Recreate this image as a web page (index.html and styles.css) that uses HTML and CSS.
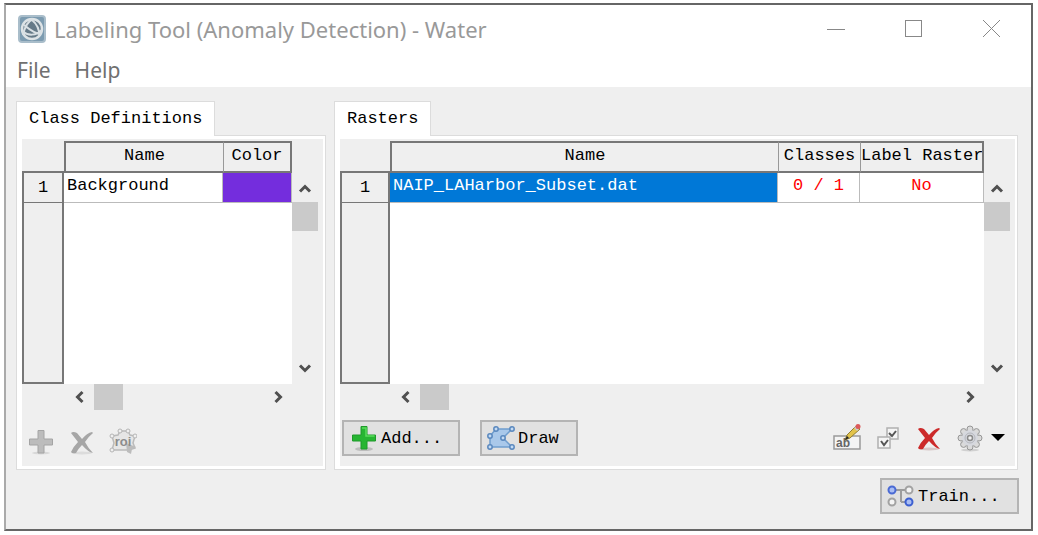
FILE: index.html
```html
<!DOCTYPE html>
<html lang="en">
<head>
    <meta charset="UTF-8">
    <meta name="viewport" content="width=device-width, initial-scale=1.0">
    <title>Labeling Tool (Anomaly Detection) - Water</title>
    <link rel="stylesheet" href="styles.css">
</head>
<body>
    <!-- shared scrollbar arrow -->
    <svg class="defs" width="0" height="0">
        <symbol id="chevron" viewBox="0 0 14 14">
            <path d="M2 9.500 L7 4.500 L12 9.500" fill="none" stroke="#505050" stroke-width="3"/>
        </symbol>
    </svg>

    <div class="window">
        <header class="title-bar">
            <svg class="app-icon" viewBox="0 0 28 28">
                <rect x="1" y="1" width="26" height="26" rx="3" fill="#7c9bb0" stroke="#a9bdca" stroke-width="2"/>
                <circle cx="14" cy="14" r="10" fill="#667a88" stroke="#dde3e6" stroke-width="2.500"/>
                <path d="M5 20 C7 11 10 6 15 4 M13 4 C19 9 22 14 21 21 M4 16 C10 21 18 21 24 15 M6 10 C12 15 18 19 23 19" fill="none" stroke="#d9e0e4" stroke-width="2"/>
            </svg>
            <h1>Labeling Tool (Anomaly Detection) - Water</h1>
            <div class="window-controls">
                <button type="button" aria-label="Minimize"><svg viewBox="0 0 20 20"><path d="M1 10.500 H19"/></svg></button>
                <button type="button" aria-label="Maximize"><svg viewBox="0 0 20 20"><rect x="1.500" y="1.500" width="16" height="16"/></svg></button>
                <button type="button" aria-label="Close"><svg viewBox="0 0 20 20"><path d="M1 1 L18 18 M18 1 L1 18"/></svg></button>
            </div>
        </header>

        <nav class="menu-bar">
            <button type="button">File</button>
            <button type="button">Help</button>
        </nav>

        <main class="panels">
            <section class="panel classes">
                <h2 class="tab">Class Definitions</h2>
                <div class="panel-box">
                    <div class="panel-body">
                        <div class="grid">
                            <table>
                                <colgroup><col class="col-num"><col><col class="col-color"></colgroup>
                                <thead>
                                    <tr><td class="corner"></td><th>Name</th><th>Color</th></tr>
                                </thead>
                                <tbody>
                                    <tr><th>1</th><td>Background</td><td class="swatch"></td></tr>
                                    <tr class="filler"><th></th><td colspan="2"></td></tr>
                                </tbody>
                            </table>
                            <div class="vscroll">
                                <button type="button" aria-label="Scroll up"><svg><use href="#chevron"/></svg></button>
                                <div class="thumb"></div>
                                <button type="button" class="down" aria-label="Scroll down"><svg><use href="#chevron"/></svg></button>
                            </div>
                            <div class="hscroll">
                                <button type="button" class="left" aria-label="Scroll left"><svg><use href="#chevron"/></svg></button>
                                <div class="thumb"></div>
                                <button type="button" class="right" aria-label="Scroll right"><svg><use href="#chevron"/></svg></button>
                            </div>
                        </div>
                        <div class="toolbar">
                            <button type="button" class="tool" aria-label="Add class" disabled>
                                <svg viewBox="0 0 28 28">
                                    <ellipse cx="14" cy="25" rx="9" ry="1.500" fill="#d8d8d8"/>
                                    <path d="M11 2.500 H17 V11 H25.500 V17 H17 V25 H11 V17 H2.500 V11 H11 Z" fill="#bcbcbc" stroke="#a4a4a4"/>
                                </svg>
                            </button>
                            <button type="button" class="tool" aria-label="Remove class" disabled>
                                <svg viewBox="0 0 28 28">
                                    <ellipse cx="14" cy="25" rx="10" ry="1.500" fill="#dcdcdc"/>
                                    <path d="M3 5 Q5 3 9 5 L14 11 Q19 5 24 4 L25 5 Q20 9 17 14 Q20 20 25 25 Q20 24 14 17 Q10 21 8 25 Q4 26 3 24 Q5 19 10 14 Z" fill="#a6a6a6"/>
                                </svg>
                            </button>
                            <button type="button" class="tool" aria-label="Class from ROI" disabled>
                                <svg viewBox="0 0 28 28">
                                    <path d="M3 8 L9 7 L11 3 L19 3 L21 7 L26 8 L24 15 L26 20 L20 22 L3 22 L5 15 Z" fill="#e6e6e6" stroke="#bababa" stroke-width="1.500"/>
                                    <g fill="#f0f0f0" stroke="#b5b5b5"><circle cx="3" cy="8" r="2"/><circle cx="11" cy="3" r="2"/><circle cx="19" cy="3" r="2"/><circle cx="26" cy="8" r="2"/><circle cx="3" cy="22" r="2"/></g>
                                    <path d="M17 15 L27 19 L23 21 L22 26 L18 24 Z" fill="#bcbcbc"/>
                                    <text class="icon-text" x="14" y="18" text-anchor="middle" font-size="13" fill="#8c8c8c">roi</text>
                                </svg>
                            </button>
                        </div>
                    </div>
                </div>
            </section>

            <section class="panel rasters">
                <h2 class="tab">Rasters</h2>
                <div class="panel-box">
                    <div class="panel-body">
                        <div class="grid">
                            <table>
                                <colgroup><col class="col-num"><col><col class="col-classes"><col class="col-label"></colgroup>
                                <thead>
                                    <tr><td class="corner"></td><th>Name</th><th>Classes</th><th>Label Raster</th></tr>
                                </thead>
                                <tbody>
                                    <tr><th>1</th><td class="selected">NAIP_LAHarbor_Subset.dat</td><td class="alert">0 / 1</td><td class="alert">No</td></tr>
                                    <tr class="filler"><th></th><td colspan="3"></td></tr>
                                </tbody>
                            </table>
                            <div class="vscroll">
                                <button type="button" aria-label="Scroll up"><svg><use href="#chevron"/></svg></button>
                                <div class="thumb"></div>
                                <button type="button" class="down" aria-label="Scroll down"><svg><use href="#chevron"/></svg></button>
                            </div>
                            <div class="hscroll">
                                <button type="button" class="left" aria-label="Scroll left"><svg><use href="#chevron"/></svg></button>
                                <div class="thumb"></div>
                                <button type="button" class="right" aria-label="Scroll right"><svg><use href="#chevron"/></svg></button>
                            </div>
                        </div>
                        <div class="toolbar">
                            <button type="button" class="push add">
                                <svg viewBox="0 0 28 28">
                                    <ellipse cx="14" cy="25" rx="9" ry="2" fill="#bcbcbc"/>
                                    <path d="M11 2.500 H17 V11 H25.500 V17 H17 V25 H11 V17 H2.500 V11 H11 Z" fill="#27b532" stroke="#1f9a2b"/>
                                    <path d="M12 4 H16 V12 H24.500" fill="none" stroke="#5bdc5c" stroke-width="1.500"/>
                                </svg>
                                Add...
                            </button>
                            <button type="button" class="push draw">
                                <svg viewBox="0 0 28 28">
                                    <path d="M3 23 L3 12 L9 5 L25 5 L16 14 L25 23 Z" fill="#a9c8ea" stroke="#6f9dce" stroke-width="1.500"/>
                                    <g fill="#c5dbf3" stroke="#5a88be" stroke-width="1.500"><circle cx="3" cy="23" r="2.200"/><circle cx="3" cy="12" r="2.200"/><circle cx="9" cy="5" r="2.200"/><circle cx="25" cy="5" r="2.200"/><circle cx="16" cy="14" r="2.200"/><circle cx="25" cy="23" r="2.200"/></g>
                                </svg>
                                Draw
                            </button>
                            <div class="tools-right">
                                <button type="button" class="tool" aria-label="Rename">
                                    <svg viewBox="0 0 28 28">
                                        <rect x="1" y="12" width="26" height="13" fill="#f4f4f4" stroke="#9a9a9a" stroke-width="1.500"/>
                                        <text class="icon-text" x="3" y="23" font-size="12" fill="#666">ab</text>
                                        <path d="M12 16 L14 11 L23 2 L27 5 L17 14 Z" fill="#e2c34a" stroke="#8f7c35"/>
                                        <path d="M12 16 L14 12 L16 14 Z" fill="#222"/>
                                        <path d="M22 3 L25 6" stroke="#c9ced2" stroke-width="2.500"/>
                                        <circle cx="25" cy="2.500" r="2.500" fill="#dc5a5a"/>
                                    </svg>
                                </button>
                                <button type="button" class="tool" aria-label="Check all">
                                    <svg viewBox="0 0 28 28">
                                        <g fill="#f5f5f5" stroke="#b0b0b0" stroke-width="1.500"><rect x="13" y="4" width="11" height="11"/><rect x="4" y="13" width="12" height="11"/></g>
                                        <path d="M15 9 L18 12 L22 7 M7 17 L10 21 L14 16" fill="none" stroke="#555" stroke-width="2"/>
                                    </svg>
                                </button>
                                <button type="button" class="tool" aria-label="Delete">
                                    <svg viewBox="0 0 28 28">
                                        <ellipse cx="14" cy="25" rx="10" ry="1.500" fill="#d8c8c8"/>
                                        <path d="M3 5 Q5 3 9 5 L14 11 Q19 5 24 4 L25 5 Q20 9 17 14 Q20 20 25 25 Q20 24 14 17 Q10 21 8 25 Q4 26 3 24 Q5 19 10 14 Z" fill="#cc2a2a"/>
                                    </svg>
                                </button>
                                <button type="button" class="tool options" aria-label="Options">
                                    <svg viewBox="0 0 28 28">
                                        <ellipse cx="14" cy="26" rx="9" ry="1.500" fill="#d0d0d0"/>
                                        <g fill="#dadada" stroke="#969696"><circle cx="14" cy="5" r="3"/><circle cx="20.400" cy="7.600" r="3"/><circle cx="23" cy="14" r="3"/><circle cx="20.400" cy="20.400" r="3"/><circle cx="14" cy="23" r="3"/><circle cx="7.600" cy="20.400" r="3"/><circle cx="5" cy="14" r="3"/><circle cx="7.600" cy="7.600" r="3"/></g>
                                        <circle cx="14" cy="14" r="8" fill="#d6d8de"/>
                                        <circle cx="14" cy="14" r="5" fill="none" stroke="#b4b6bc"/>
                                        <circle cx="14" cy="14" r="2.500" fill="#f0f0f0" stroke="#8b8b8b" stroke-width="1.500"/>
                                    </svg>
                                    <svg class="caret" viewBox="0 0 14 8"><path d="M0 0 H14 L7 7 Z"/></svg>
                                </button>
                            </div>
                        </div>
                    </div>
                </div>
            </section>
        </main>

        <footer class="actions">
            <button type="button" class="push train">
                <svg viewBox="0 0 28 28">
                    <path d="M7 8 H21 M14 8 V20 M14 20 H21" fill="none" stroke="#9c9c9c" stroke-width="2"/>
                    <g stroke-width="2"><circle cx="5" cy="8" r="3.500" fill="#a9bdf3" stroke="#4a6ad4"/><circle cx="22" cy="8" r="3.500" fill="#f4f4f4" stroke="#a2a2a2"/><circle cx="5" cy="20" r="3.500" fill="#f4f4f4" stroke="#a2a2a2"/><circle cx="22" cy="20" r="3.500" fill="#a9bdf3" stroke="#3c5fd0"/></g>
                </svg>
                Train...
            </button>
        </footer>
    </div>
</body>
</html>
```
FILE: styles.css
```css
* {
    box-sizing: border-box;
}
body {
    margin: 0;
    padding: 3px 5px 4px 4px;
    background: white;
    color: black;
    font-family: "Liberation Mono", monospace;
    font-size: 17px;
}
button {
    margin: 0;
    padding: 0;
    border: none;
    background: none;
    color: inherit;
    font: inherit;
}
.defs {
    position: absolute;
}
.window {
    display: flex;
    flex-direction: column;
    min-height: calc(100vh - 7px);
    background: #efefef;
    border: 2px solid #666;
    border-left-color: #aaa;
}

/* title and menu */
.title-bar {
    display: flex;
    align-items: center;
    height: 48px;
    padding-left: 12px;
    background: white;
    color: #999;
    font-family: "Noto Sans", sans-serif;
}
.app-icon {
    width: 28px;
    height: 28px;
    margin-right: 8px;
}
h1 {
    flex: 1;
    margin: 0;
    font-size: 22px;
    font-weight: normal;
    white-space: nowrap;
}
.window-controls {
    display: flex;
}
.window-controls button {
    width: 78px;
    height: 48px;
}
.window-controls svg {
    display: block;
    width: 20px;
    height: 20px;
    margin: auto;
    fill: none;
    stroke: #888;
}
.menu-bar {
    display: flex;
    gap: 24px;
    height: 34px;
    padding: 4px 0 0 11px;
    background: white;
    color: #707070;
    font-family: "Noto Sans", sans-serif;
    font-size: 21px;
    line-height: 27px;
}
.menu-bar button {
    height: 27px;
}

/* tabbed panels */
.panels {
    display: flex;
    flex: 1;
    gap: 8px;
    padding: 14px 13px 0 10px;
}
.panel {
    display: flex;
    flex-direction: column;
}
.classes {
    width: 310px;
}
.rasters {
    flex: 1;
}
.tab {
    position: relative;
    align-self: flex-start;
    height: 35px;
    margin: 0 0 -1px;
    padding: 0 12px;
    background: white;
    border: 1px solid #dcdcdc;
    border-bottom: none;
    font-size: 17px;
    font-weight: normal;
    line-height: 34px;
}
.panel-box {
    display: flex;
    flex: 1;
    padding: 3px 2px 3px 5px;
    background: white;
    border: 1px solid #dcdcdc;
}
.panel-body {
    display: flex;
    flex: 1;
    flex-direction: column;
    padding-top: 2px;
    background: #efefef;
}

/* tables */
.grid {
    display: grid;
    flex: 1;
    grid-template-columns: 1fr 26px;
    grid-template-rows: 1fr 26px;
    padding-right: 5px;
}
table {
    width: 100%;
    height: 100%;
    table-layout: fixed;
    border-collapse: separate;
    border-spacing: 0;
}
.classes .col-num {
    width: 42px;
}
.rasters .col-num {
    width: 50px;
}
.col-color {
    width: 69px;
}
.col-classes {
    width: 82px;
}
.col-label {
    width: 124px;
}
th, td {
    height: 30px;
    padding: 0 0 3px;
    overflow: hidden;
    font-weight: normal;
    line-height: 24px;
    white-space: nowrap;
}
thead th {
    height: 32px;
    border: solid #777;
    border-width: 2px 0;
    background: #efefef;
}
thead th + th {
    border-left: 1px solid #999;
}
thead th:last-child {
    border-right: 2px solid #777;
}
.corner + th {
    border-left: 2px solid #777;
}
.corner {
    border-bottom: 2px solid #777;
}
tbody th {
    padding: 0;
    border: solid #777;
    border-width: 0 2px 1px 2px;
    background: #efefef;
}
tbody td {
    padding-left: 3px;
    background: white;
    border-right: 1px solid #bbb;
    border-bottom: 1px solid #bbb;
}
.swatch {
    background: #742ddd;
}
.selected {
    background: #0078d7;
    color: white;
}
.alert {
    padding-left: 0;
    color: #f00;
    text-align: center;
}
.filler th, .filler td {
    height: auto;
}
.filler th {
    border-bottom-width: 2px;
}
.filler td {
    border: none;
}

/* scrollbars */
.vscroll {
    display: flex;
    flex-direction: column;
    padding: 34px 0 3px;
}
.vscroll button {
    height: 27px;
}
.hscroll {
    display: flex;
}
.classes .hscroll {
    padding-left: 43px;
}
.rasters .hscroll {
    padding-left: 51px;
}
.hscroll button {
    width: 29px;
}
.vscroll svg, .hscroll svg {
    display: block;
    width: 14px;
    height: 14px;
    margin: auto;
}
.vscroll .thumb {
    height: 29px;
    background: #cacaca;
}
.hscroll .thumb {
    width: 29px;
    background: #cacaca;
}
.down {
    margin-top: auto;
}
.down svg {
    transform: rotate(180deg);
}
.left svg {
    transform: rotate(-90deg);
}
.right {
    margin-left: auto;
}
.right svg {
    transform: rotate(90deg);
}

/* buttons */
.toolbar {
    display: flex;
    align-items: center;
    height: 56px;
    padding: 0 10px 0 2px;
}
.classes .toolbar {
    gap: 13px;
    padding: 8px 5px 0;
}
.tool svg, .push svg {
    display: block;
    width: 28px;
    height: 28px;
}
.icon-text {
    font-family: "Liberation Sans", sans-serif;
    font-weight: bold;
}
.push {
    display: flex;
    align-items: center;
    gap: 3px;
    height: 36px;
    padding: 0 6px;
    background: #e1e1e1;
    border: 2px solid #b4b4b4;
}
.add {
    width: 118px;
}
.draw {
    width: 98px;
    margin-left: 20px;
    padding: 0 5px;
}
.train {
    width: 139px;
    padding: 0 5px;
}
.tools-right {
    display: flex;
    gap: 13px;
    margin-left: auto;
}
.options {
    display: flex;
    align-items: center;
    gap: 7px;
}
.tool .caret {
    width: 14px;
    height: 8px;
}
.actions {
    display: flex;
    justify-content: flex-end;
    padding: 8px 12px 15px;
}
```
